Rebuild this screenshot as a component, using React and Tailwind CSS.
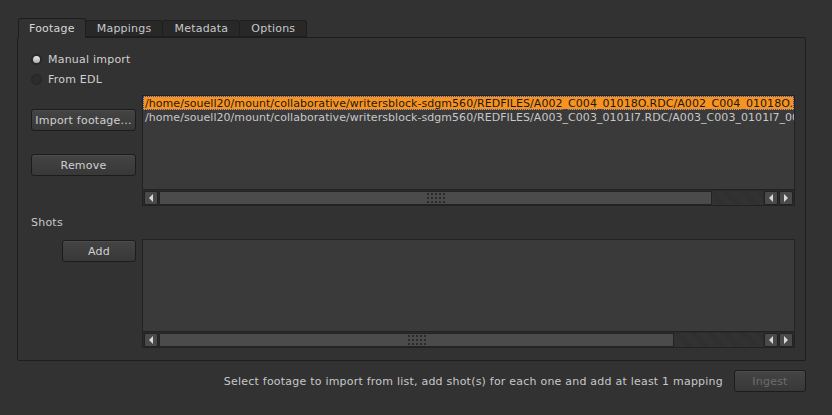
// App.jsx - footage ingest panel

const tabs = ["Footage", "Mappings", "Metadata", "Options"];

const footage = [
  "/home/souell20/mount/collaborative/writersblock-sdgm560/REDFILES/A002_C004_01018O.RDC/A002_C004_01018O.R3D",
  "/home/souell20/mount/collaborative/writersblock-sdgm560/REDFILES/A003_C003_0101I7.RDC/A003_C003_0101I7_001.R3D",
];

function Button({ children, className = "", disabled = false }) {
  return (
    <div
      className={
        "flex items-center justify-center h-[22px] whitespace-nowrap rounded-[3px] border border-[#1c1c1c] bg-gradient-to-b from-[#444444] to-[#383838] shadow-[inset_0_1px_0_#4c4c4c] " +
        (disabled ? "text-[#6c6c6c] " : "text-[#d0d0d0] ") +
        className
      }
    >
      {children}
    </div>
  );
}

function Radio({ checked, label }) {
  return (
    <div className="flex items-center h-[20px] gap-[6px]">
      <div className="w-[11px] h-[11px] rounded-full border border-[#262626] bg-[#2c2c2c] flex items-center justify-center">
        {checked && <div className="w-[7px] h-[7px] rounded-full bg-gradient-to-b from-[#e8e8e8] to-[#b0b0b0]" />}
      </div>
      <span className="text-[#d0d0d0]">{label}</span>
    </div>
  );
}

// small dotted grip drawn in the middle of a scrollbar thumb
function Grip() {
  const dots = [];
  for (let r = 0; r < 3; r++)
    for (let c = 0; c < 5; c++) dots.push(<rect key={r + "-" + c} x={c * 4} y={r * 4} width="2" height="2" fill="#2a2a2a" />);
  return (
    <svg width="18" height="10" viewBox="0 0 18 10">
      {dots}
    </svg>
  );
}

function Arrow({ dir }) {
  return (
    <div className="w-[14px] h-[14px] shrink-0 rounded-[2px] bg-[#4a4a4a] border border-[#222] flex items-center justify-center">
      <svg width="6" height="8" viewBox="0 0 6 8">
        {dir === "left" ? <polygon points="5,0 5,8 1,4" fill="#d8d8d8" /> : <polygon points="1,0 1,8 5,4" fill="#d8d8d8" />}
      </svg>
    </div>
  );
}

function HScroll({ thumb }) {
  return (
    <div className="h-[16px] shrink-0 flex items-center bg-[#2b2b2b] border-t border-[#222] px-[1px] gap-[1px]">
      <Arrow dir="left" />
      <div className="flex-1 h-[14px] flex bg-[repeating-linear-gradient(45deg,#2e2e2e_0px,#2e2e2e_1px,#343434_1px,#343434_2px)]">
        <div
          className="h-full bg-[#4b4b4b] border border-[#242424] flex items-center justify-center"
          style={{ width: thumb }}
        >
          <Grip />
        </div>
      </div>
      <Arrow dir="left" />
      <Arrow dir="right" />
    </div>
  );
}

export default function App() {
  return (
    <div
      className="w-[832px] h-[415px] bg-[#323232] text-[11px] leading-none tracking-[0.22px] text-[#c8c8c8] flex flex-col pl-[17px] pr-[26px] pt-[17px]"
      style={{ fontFamily: '"DejaVu Sans", sans-serif' }}
    >
      {/* tab bar */}
      <div className="flex items-end pl-[1px] h-[20px]">
        {tabs.map((t, i) =>
          i === 0 ? (
            <div
              key={t}
              className="h-[20px] px-[10px] flex items-center bg-[#323232] border border-b-0 border-[#1e1e1e] rounded-t-[3px] text-[#d6d6d6] relative top-[1px]"
            >
              {t}
            </div>
          ) : (
            <div
              key={t}
              className="h-[17px] px-[11px] flex items-center bg-[#282828] border border-[#1e1e1e] border-l-0 rounded-tr-[3px] text-[#c8c8c8]"
            >
              {t}
            </div>
          )
        )}
      </div>

      {/* tab page */}
      <div className="h-[324px] border border-[#1e1e1e] rounded-[2px] pl-[13px] pr-[10px] pt-[11px] flex flex-col">
        <Radio checked label="Manual import" />
        <Radio label="From EDL" />

        <div className="flex mt-[6px] gap-[6px]">
          <div className="w-[105px] shrink-0 flex flex-col pt-[14px] gap-[23px]">
            <Button>Import footage...</Button>
            <Button>Remove</Button>
          </div>
          <div className="flex-1 min-w-0 h-[111px] border border-[#222] bg-[#3a3a3a] flex flex-col">
            <div className="flex-1 overflow-hidden tracking-[0.05px]">
              {footage.map((p, i) => (
                <div
                  key={p}
                  className={
                    "h-[14px] pl-[2px] flex items-center whitespace-nowrap " +
                    (i === 0 ? "bg-[#f7931e] text-[#1a1a1a] outline outline-1 outline-dotted outline-[#2050c0] -outline-offset-1" : "text-[#c8c8c8]")
                  }
                >
                  {p}
                </div>
              ))}
            </div>
            <HScroll thumb={553} />
          </div>
        </div>

        <div className="h-[16px] flex items-center mt-[8px] text-[#c8c8c8]">Shots</div>

        <div className="flex mt-[9px] gap-[6px]">
          <div className="w-[105px] shrink-0 flex justify-end pt-[1px]">
            <Button className="w-[74px]">Add</Button>
          </div>
          <div className="flex-1 min-w-0 h-[109px] border border-[#222] bg-[#3a3a3a] flex flex-col">
            <div className="flex-1" />
            <HScroll thumb={515} />
          </div>
        </div>
      </div>

      {/* status row */}
      <div className="flex items-center justify-end gap-[11px] mt-[9px]">
        <span className="text-[#c8c8c8]">Select footage to import from list, add shot(s) for each one and add at least 1 mapping</span>
        <Button disabled className="w-[72px]">
          Ingest
        </Button>
      </div>
    </div>
  );
}
